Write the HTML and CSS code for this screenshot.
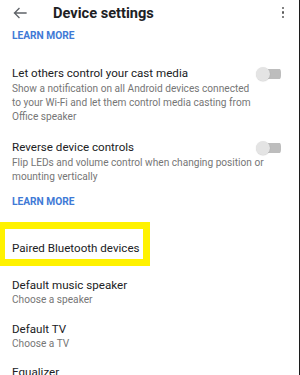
FILE: index.html
```html
<!DOCTYPE html>
<html lang="en">
<head>
<meta charset="utf-8">
<title>Device settings</title>
<link rel="stylesheet" href="styles.css">
</head>
<body>
<div class="screen">
  <header class="appbar">
    <svg class="back" width="14" height="12" viewBox="0 0 14 12" aria-hidden="true">
      <path d="M13 6H1.5M6 1.5L1.5 6L6 10.5" fill="none" stroke="#5f6368" stroke-width="1.3" stroke-linecap="square"/>
    </svg>
    <h1 class="title">Device settings</h1>
    <div class="kebab"><span></span><span></span><span></span></div>
  </header>

  <a class="learn learn-top">LEARN MORE</a>

  <div class="row row-cast">
    <div class="primary">Let others control your cast media</div>
    <div class="switch"><span class="thumb"></span></div>
    <div class="secondary">Show a notification on all Android devices connected<br>to your Wi-Fi and let them control media casting from<br>Office speaker</div>
  </div>

  <div class="row row-reverse">
    <div class="primary">Reverse device controls</div>
    <div class="switch"><span class="thumb"></span></div>
    <div class="secondary">Flip LEDs and volume control when changing position or<br>mounting vertically</div>
  </div>

  <a class="learn learn-bottom">LEARN MORE</a>

  <div class="highlight">
    <div class="primary">Paired Bluetooth devices</div>
  </div>

  <div class="item item-music">
    <div class="primary">Default music speaker</div>
    <div class="secondary">Choose a speaker</div>
  </div>

  <div class="item item-tv">
    <div class="primary">Default TV</div>
    <div class="secondary">Choose a TV</div>
  </div>

  <div class="item item-eq">
    <div class="primary">Equalizer</div>
  </div>
</div>
</body>
</html>
```

FILE: styles.css
```css
html, body {
  margin: 0;
  padding: 0;
  background: #ffffff;
}

.screen {
  width: 300px;
  height: 375px;
  box-sizing: border-box;
  border-right: 1px solid #1c1c1c;
  overflow: hidden;
  font-family: Roboto, "Noto Sans", "Liberation Sans", sans-serif;
  color: #202124;
  display: flex;
  flex-direction: column;
}

.appbar {
  height: 26px;
  display: flex;
  align-items: center;
  flex-shrink: 0;
}

.back {
  margin-left: 13px;
  margin-top: -1px;
  display: block;
}

.title {
  margin: 0 0 0 26px;
  font-size: 14.6px;
  font-weight: 700;
  color: #202124;
  letter-spacing: 0;
  line-height: 26px;
  flex: 1;
}

.kebab {
  display: flex;
  flex-direction: column;
  gap: 2.6px;
  margin-right: 15px;
  margin-top: -1px;
}

.kebab span {
  width: 2.2px;
  height: 2.2px;
  border-radius: 50%;
  background: #5a5a5a;
}

.learn {
  display: block;
  padding-left: 12px;
  font-size: 10.2px;
  font-weight: 700;
  line-height: 14px;
  color: #3f7ad6;
  letter-spacing: 0;
  flex-shrink: 0;
}

.learn-top { margin-top: 3px; }
.learn-bottom { margin-top: 11px; }

.row {
  display: grid;
  grid-template-columns: 1fr auto;
  padding: 0 18px 0 12px;
  flex-shrink: 0;
}

.row .secondary {
  grid-column: 1 / -1;
  margin-top: 1px;
}

.row-cast { margin-top: 22px; }
.row-reverse { margin-top: 15px; }

.primary {
  font-size: 11.6px;
  line-height: 16px;
  color: #202124;
  white-space: nowrap;
}

.secondary {
  font-size: 10.15px;
  line-height: 14px;
  color: #767676;
  white-space: nowrap;
}

.switch {
  align-self: center;
  width: 25px;
  height: 14px;
  display: flex;
  align-items: center;
  margin-top: 2px;
  background: linear-gradient(#bdbdbd, #bdbdbd) no-repeat 2px 50% / 23px 10px;
  border-radius: 5px;
}

.thumb {
  width: 14px;
  height: 14px;
  border-radius: 50%;
  background: #e4e4e4;
  box-shadow: 0 0.5px 1px rgba(0, 0, 0, 0.18);
}

.highlight {
  margin-top: 13px;
  margin-left: -2px;
  width: 152px;
  box-sizing: border-box;
  border: 7px solid #fff200;
  padding: 11px 0 3px 7px;
  flex-shrink: 0;
}

.item {
  padding-left: 12px;
  flex-shrink: 0;
}

.item-music { margin-top: 11px; }
.item-tv { margin-top: 14px; }
.item-eq { margin-top: 13px; }
```
